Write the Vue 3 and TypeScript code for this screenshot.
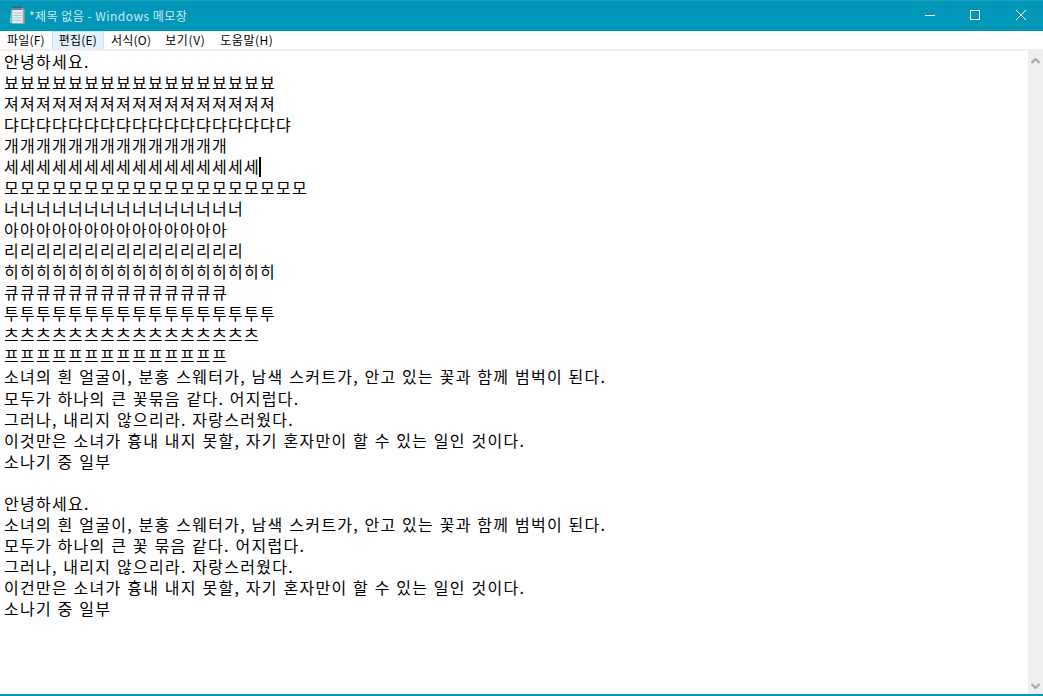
<script setup lang="ts">
const rep = (s: string, n: number) => s.repeat(n)
const lines: string[] = [
  '안녕하세요.',
  rep('뵤', 17),
  rep('져', 17),
  rep('댜', 18),
  rep('개', 14),
  rep('세', 16),
  rep('모', 19),
  rep('너', 15),
  rep('아', 14),
  rep('리', 15),
  rep('히', 17),
  rep('큐', 14),
  rep('투', 17),
  rep('츠', 16),
  rep('프', 14),
  '소녀의 흰 얼굴이, 분홍 스웨터가, 남색 스커트가, 안고 있는 꽃과 함께 범벅이 된다.',
  '모두가 하나의 큰 꽃묶음 같다. 어지럽다.',
  '그러나, 내리지 않으리라. 자랑스러웠다.',
  '이것만은 소녀가 흉내 내지 못할, 자기 혼자만이 할 수 있는 일인 것이다.',
  '소나기 중 일부',
  '',
  '안녕하세요.',
  '소녀의 흰 얼굴이, 분홍 스웨터가, 남색 스커트가, 안고 있는 꽃과 함께 범벅이 된다.',
  '모두가 하나의 큰 꽃 묶음 같다. 어지럽다.',
  '그러나, 내리지 않으리라. 자랑스러웠다.',
  '이건만은 소녀가 흉내 내지 못할, 자기 혼자만이 할 수 있는 일인 것이다.',
  '소나기 중 일부',
]
const menus = ['파일(F)', '편집(E)', '서식(O)', '보기(V)', '도움말(H)']
</script>

<template>
  <div class="win">
    <header class="title">
      <svg class="appicon" width="16" height="18" viewBox="0 0 16 18">
        <path d="M0.5 16.5L2.5 2.5h1v15z" fill="#7fc4d6" />
        <rect x="14" y="3" width="1.5" height="15" fill="#b9a98c" />
        <rect x="3" y="2.5" width="11" height="15" fill="#e6f0f5" stroke="#8a98a3" stroke-width="0.6" />
        <rect x="3" y="2" width="11" height="2" fill="#9fb9c9" />
        <path d="M4 0.5v3.5M6 0.5v3.5M8 0.5v3.5M10 0.5v3.5M12 0.5v3.5" stroke="#3b4a55" />
        <path d="M4.5 7h8M4.5 9.5h8M4.5 12h8M4.5 14.5h8" stroke="#a9c2d2" />
      </svg>
      <span class="name">*제목 없음 - Windows 메모장</span>
      <div class="controls">
        <div class="ctl">
          <svg class="min" width="10" height="10" viewBox="0 0 10 10"><path d="M0 5.5h10" stroke="#fff" /></svg>
        </div>
        <div class="ctl">
          <svg width="10" height="10" viewBox="0 0 10 10"><rect x=".5" y=".5" width="9" height="9" fill="none" stroke="#fff" /></svg>
        </div>
        <div class="ctl">
          <svg width="10" height="10" viewBox="0 0 10 10"><path d="M0 0l10 10M10 0L0 10" stroke="#fff" /></svg>
        </div>
      </div>
    </header>
    <nav class="menu">
      <span v-for="(m, i) in menus" :key="m" class="item" :class="{ active: i === 1 }">{{ m }}</span>
    </nav>
    <div class="sep"></div>
    <main class="body">
      <div class="text">
        <div v-for="(l, i) in lines" :key="i" class="line">
          {{ l }}<i v-if="i === 5" class="caret"></i>
        </div>
      </div>
      <aside class="scroll">
        <svg width="9" height="6" viewBox="0 0 9 6"><path d="M0.5 5L4.5 1l4 4" fill="none" stroke="#a6a6a6" stroke-width="2" /></svg>
        <svg width="9" height="6" viewBox="0 0 9 6"><path d="M0.5 1l4 4 4-4" fill="none" stroke="#a6a6a6" stroke-width="2" /></svg>
      </aside>
    </main>
    <div class="bottom"></div>
  </div>
</template>

<style>
html, body { margin: 0; background: #fff; overflow: hidden; }
</style>

<style scoped>
.win {
  width: 1043px;
  height: 696px;
  display: flex;
  flex-direction: column;
  background: #fff;
  font-family: "Noto Sans CJK KR", "Liberation Sans", sans-serif;
  color: #000;
  overflow: hidden;
}
.title {
  height: 31px;
  flex: none;
  background: #0097b8;
  display: flex;
  align-items: center;
  padding: 0 0 2px 9px;
  color: #cfeaf1;
  font-size: 12px;
  border-top: 1px solid #1d9fbd;
  box-sizing: border-box;
}
.appicon { margin-right: 4px; }
.name { flex: 1; letter-spacing: 0.47px; }
.controls { display: flex; height: 100%; margin-right: -1px; }
.ctl {
  width: 46px;
  display: flex;
  align-items: center;
  justify-content: center;
}
.min { margin-left: 2px; }
.menu {
  height: 18px;
  flex: none;
  display: flex;
  font-size: 12px;
  line-height: 18px;
  background: #fff;
}
.item {
  padding: 0 7px;
  box-sizing: border-box;
  height: 19px;
  letter-spacing: 0.2px;
}
.item:nth-child(4) { letter-spacing: 0.6px; padding-right: 8px; }
.item:last-child { letter-spacing: 0.5px; }
.item.active {
  background: #e5f1fb;
  box-shadow: inset 0 0 0 1px #cce4f7;
}
.sep { height: 2px; background: #f0f0f0; flex: none; }
.body { flex: 1; min-height: 0; display: flex; }
.text {
  flex: 1;
  padding: 0 0 0 4px;
  font-size: 16px;
  letter-spacing: 1.28px;
  word-spacing: 0.75px;
}
.line {
  height: 21.04px;
  line-height: 21px;
  white-space: pre;
}
.caret {
  display: inline-block;
  width: 2px;
  height: 20px;
  background: #000;
  vertical-align: -4px;
  margin-left: -1px;
}
.scroll {
  width: 15px;
  flex: none;
  background: #eeeeee;
  display: flex;
  flex-direction: column;
  justify-content: space-between;
  align-items: center;
  padding: 7px 0 5px;
  box-sizing: border-box;
}
.bottom { height: 2px; flex: none; background: #0097b8; }
</style>
